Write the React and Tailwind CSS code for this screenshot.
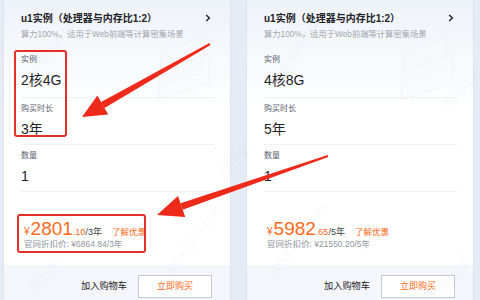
import React from "react";

const font = "font-['Liberation_Sans','Noto_Sans_CJK_SC',sans-serif]";

function Field({ label, value, first }) {
  return (
    <div className={`border-b border-[#edf0f4] ${first ? "pt-0 pb-[7px]" : "pt-[4px] pb-[5px]"}`}>
      <div className="text-[8px] leading-[14px] text-[#5c6270]">{label}</div>
      <div className="mt-[3px] text-[14px] leading-[20px] text-[#1f2329]">{value}</div>
    </div>
  );
}

function Card({ spec, years, price, cents, orig, marked }) {
  return (
    <div className="relative flex h-[320px] w-[228px] flex-col border-x border-[#dde4ef] bg-[linear-gradient(180deg,#eef2f9_0px,#ffffff_110px)]">
      {/* faint decorative cubes */}
      <div className="absolute right-[26px] top-[44px] h-[36px] w-[44px] skew-y-[-18deg] rounded-[2px] border border-[#eef1f6] bg-[#f7f8fb]" />
      <div className="absolute right-[20px] top-[62px] h-[30px] w-[52px] skew-y-[-18deg] rounded-[2px] border border-[#f0f2f7] bg-[#f9fafc]/60" />

      <div className="relative px-[17px] pt-[9px]">
        <div className="flex h-[18px] items-center justify-between">
          <span className="text-[10px] font-semibold text-[#1f2329]">u1实例（处理器与内存比1:2）</span>
          <svg width="6" height="8" viewBox="0 0 6 8" className="mr-[2px]">
            <path d="M1.2 1 L4.4 4 L1.2 7" fill="none" stroke="#1f2329" strokeWidth="1.4" />
          </svg>
        </div>
        <div className="mt-[1px] text-[8.3px] leading-[12px] text-[#a3a8b0]">算力100%，适用于Web前端等计算密集场景</div>
      </div>

      <div className="relative ml-[17px] mr-[16px] mt-[13px]">
        <Field label="实例" value={spec} first />
        <Field label="购买时长" value={years} />
        <Field label="数量" value="1" />
      </div>

      <div className="relative px-[20px] pt-[27px]">
        <div className="flex h-[20px] items-baseline leading-[20px]">
          <span className="text-[10px] text-[#ff6a1a]">¥</span>
          <span className="ml-[1px] text-[19px] text-[#ff6a1a]">{price}</span>
          <span className="text-[9px] text-[#ff6a1a]">.{cents}</span>
          <span className="text-[9px] text-[#3a3f47]">/{years}</span>
          <span className="ml-[10px] text-[8.5px] text-[#ff6a1a]">了解优惠</span>
        </div>
        <div className="text-[8.5px] leading-[11px] text-[#8f959e]">官网折扣价: ¥{orig}/{years}</div>
      </div>

      <div className="mt-[15px] flex flex-1 items-start justify-end gap-[11px] bg-[#f4f6fb] pr-[18px] pt-[10px]">
        <span className="mt-[5px] text-[9.2px] leading-[13px] text-[#1f2329]">加入购物车</span>
        <div className="flex h-[23px] w-[74px] items-center justify-center border border-[#c5cad3] bg-white text-[9px] text-[#ff6a1a]">
          立即购买
        </div>
      </div>

      {marked && (
        <>
          <div className="absolute left-[10px] top-[50px] h-[87px] w-[53px] rounded-[3px] border-2 border-[#e5302a]" />
          <div className="absolute left-[13px] top-[214px] h-[39px] w-[129px] rounded-[3px] border-2 border-[#e5302a]" />
        </>
      )}
    </div>
  );
}

function Watermark({ text, className }) {
  return (
    <span className={`pointer-events-none absolute whitespace-nowrap text-[14px] text-[#1f2329]/[0.05] ${className}`}>
      {text}
    </span>
  );
}

export default function App() {
  return (
    <div className={`relative h-[300px] w-[480px] overflow-hidden bg-[#e6ecf5] ${font}`}>
      <div className="flex gap-[15px] pl-[3px]">
        <Card spec="2核4G" years="3年" price="2801" cents="10" orig="6864.84" marked />
        <Card spec="4核8G" years="5年" price="5982" cents="65" orig="21550.20" />
      </div>

      <Watermark text="axiaoyun.com" className="left-[10px] top-[36px] -rotate-[52deg]" />
      <Watermark text="axiaoyun.com" className="left-[252px] top-[40px] -rotate-[52deg]" />
      <Watermark text="axiaoyun.com" className="left-[150px] top-[228px] -rotate-[52deg]" />
      <Watermark text="axiaoyun.com" className="left-[255px] top-[228px] -rotate-[52deg]" />
      <Watermark text="阿小云" className="left-[215px] top-[150px] -rotate-[52deg]" />
      <Watermark text="阿小云" className="left-[440px] top-[80px] -rotate-[52deg]" />
      <Watermark text="阿小云" className="left-[25px] top-[262px] -rotate-[52deg]" />
      <Watermark text="阿小云" className="left-[436px] top-[262px] -rotate-[52deg]" />

      {/* annotation arrows */}
      <svg className="pointer-events-none absolute left-0 top-0" width="480" height="300" viewBox="0 0 480 300">
        <polygon points="210.5,44.9 209.5,43.1 101.1,102.1 104.5,108.1" fill="#ee2a1b" />
        <polygon points="82,117 97.4,95.6 108.2,114.6" fill="#ee2a1b" />
        <polygon points="328.3,156.9 327.7,155.1 180.5,203.2 182.7,209.8" fill="#ee2a1b" />
        <polygon points="157,215 178,196.1 185.2,216.9" fill="#ee2a1b" />
      </svg>
    </div>
  );
}
